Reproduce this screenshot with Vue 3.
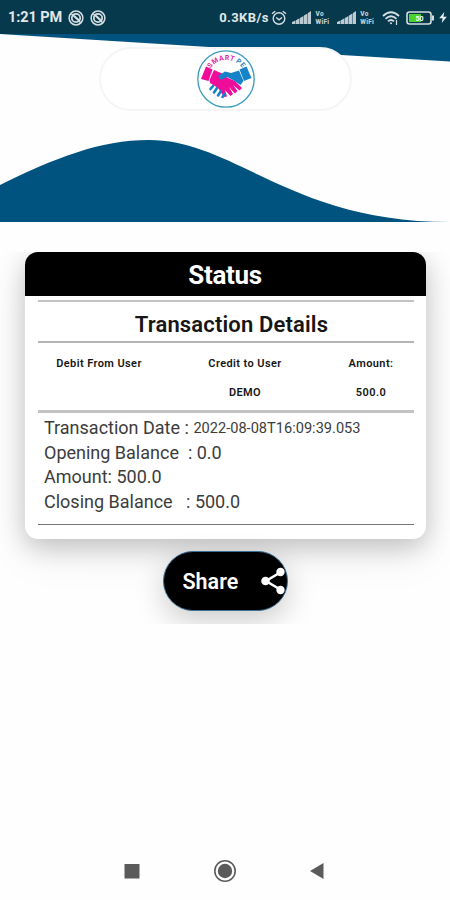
<template>
  <div class="screen">
    <header class="hero">
      <svg class="hero-bg" viewBox="0 0 450 222" width="450" height="222">
        <path d="M0 0H450V61.500L225 48L0 34Z" fill="#00527f" />
        <path d="M0 185C55 158 100 140 149 140C235 140 290 222 450 222H0Z" fill="#00527f" />
      </svg>

      <div class="status-bar">
        <span class="clock">1:21 PM</span>
        <svg v-for="n in 2" :key="n" class="notice" viewBox="0 0 16 16" width="16" height="16">
          <circle cx="8" cy="8" r="6.900" fill="none" stroke="#d5dee2" stroke-width="1.500" />
          <circle cx="8" cy="8" r="4.200" fill="none" stroke="#d5dee2" stroke-width="1.800" />
          <path d="M3.500 4L13 13M6 5.500L11 10" stroke="#d5dee2" stroke-width="1.500" />
        </svg>

        <span class="speed">0.3KB/s</span>
        <svg class="alarm" viewBox="0 0 16 16" width="16" height="16" fill="none" stroke="#d5dee2" stroke-width="1.400">
          <circle cx="8" cy="8.500" r="5.800" />
          <path d="M1 3.800L4.200 1.200M15 3.800L11.800 1.200M5.200 7.500L8 9.800L11 7.500" />
        </svg>
        <template v-for="n in 2" :key="n">
          <svg class="signal" viewBox="0 0 19 13" width="19" height="13" fill="#bccbd1">
            <path d="M0 13V11L3.500 9.500V13ZM4 13V9.300L7.500 7.300V13ZM8 13V7L11.500 5V13ZM12 13V4.500L15.500 2.400V13ZM16 13V2L19 0V13Z" />
          </svg>
          <span class="vowifi"><b>Vo</b><b>WiFi</b></span>
        </template>
        <svg class="wifi" viewBox="0 0 18 14" width="18" height="14" fill="none" stroke="#d5dee2" stroke-width="1.800">
          <path d="M1 5Q9 -2.500 17 5M3.500 7.800Q9 2.800 14.500 7.800M6 10.400Q9 7.600 12 10.400" />
          <circle cx="9" cy="12.200" r="1" fill="#d5dee2" stroke="none" />
          <path d="M14.500 9V14" stroke-width="1.200" />
        </svg>
        <svg class="battery" viewBox="0 0 29 14" width="29" height="14">
          <rect x="1" y="1" width="24" height="12" rx="2.500" fill="none" stroke="#d5dee2" stroke-width="1.600" />
          <rect x="3" y="3" width="12" height="8" fill="#4bd22c" />
          <path d="M27 4.500V9.500" stroke="#d5dee2" stroke-width="2" />
          <text x="13.500" y="10" text-anchor="middle" class="battery-level">50</text>
        </svg>
        <svg class="bolt" viewBox="0 0 9 13" width="8" height="11">
          <path d="M6 0L0 7.500H4L3 13L9 5.500H5Z" fill="#e8eef0" />
        </svg>
      </div>

      <div class="brand">
        <svg viewBox="0 0 60 60" width="60" height="60">
          <defs>
            <path id="arc" d="M12.500 23A19.500 19.500 0 0 1 48.500 23" />
          </defs>
          <circle cx="30" cy="30" r="28.200" fill="#fff" stroke="#3c9cbf" stroke-width="1.300" />
          <text class="logo-text">
            <textPath href="#arc" startOffset="50%" text-anchor="middle"><tspan fill="#e52aa0">SMART</tspan><tspan dx="1.200" fill="#2789bd">PE</tspan></textPath>
          </text>
          <!-- cuffs -->
          <path d="M5 30L10 17.500L16.500 20.500L12.500 32Z" fill="#ee0c98" />
          <path d="M43.500 20.500L50.500 17.500L55.500 29L48 32Z" fill="#1683c8" />
          <!-- hands -->
          <path d="M18 21L25 24L32 29L39 32L46 39L43.500 41.500L37 36L41.500 42L39 44.500L33 38L37 45L34.500 47L29 41L31 47.500L28 48L22 39L14 34L13.500 31Z" fill="#ee0c98" />
          <path d="M22 27L29 22.500L35 24L43 21.500L47.500 32L44.500 36L37 31L31 28L25 31Z" fill="#1683c8" />
          <path d="M17 37L14.500 40M21 39L18 43.500M25 42L22 46.500M28.500 45L26.500 48" stroke="#1683c8" stroke-width="2.600" stroke-linecap="round" />
        </svg>
      </div>
    </header>

    <main class="content">
      <section class="card">
        <h1>Status</h1>
        <div class="card-body">
          <h2>Transaction Details</h2>
          <div class="parties">
            <div v-for="p in parties" :key="p.label" class="party">
              <span>{{ p.label }}</span>
              <span>{{ p.value }}</span>
            </div>
          </div>
          <ul class="details">
            <li v-for="d in details" :key="d.label">
              <span>{{ d.label }}</span>
              <span :class="['value', d.name]">{{ d.value }}</span>
            </li>
          </ul>
        </div>
      </section>

      <button class="share">
        <span>Share</span>
        <svg viewBox="0 0 26 28" width="26" height="28" fill="#fff">
          <path d="M20 5L5 14L20 23" fill="none" stroke="#fff" stroke-width="2.600" />
          <circle cx="19.500" cy="5" r="4.200" />
          <circle cx="4.500" cy="14" r="4.300" />
          <circle cx="19.500" cy="23" r="4.200" />
        </svg>
      </button>
    </main>

    <nav class="nav-bar">
      <svg viewBox="0 0 16 16" width="16" height="16"><rect x="0.500" y="1" width="15" height="14.500" fill="#5b5b5b" /></svg>
      <svg viewBox="0 0 24 24" width="24" height="24">
        <circle cx="12" cy="12" r="10.200" fill="none" stroke="#5b5b5b" stroke-width="1.600" />
        <circle cx="12" cy="12" r="7.200" fill="#5b5b5b" />
      </svg>
      <svg viewBox="0 0 16 16" width="16" height="16"><path d="M1 8L14.500 0V16Z" fill="#5b5b5b" /></svg>
    </nav>
  </div>
</template>

<script setup>
const parties = [
  { label: 'Debit From User', value: '' },
  { label: 'Credit to User', value: 'DEMO' },
  { label: 'Amount:', value: '500.0' }
]

const details = [
  { name: 'date', label: 'Transaction Date :', value: '2022-08-08T16:09:39.053' },
  { name: 'opening', label: 'Opening Balance  :', value: '0.0' },
  { name: 'amount', label: 'Amount:', value: '500.0' },
  { name: 'closing', label: 'Closing Balance   :', value: '500.0' }
]
</script>

<style>
body {
  background: #fff;
}
</style>

<style scoped>
.screen {
  width: 450px;
  height: 900px;
  display: flex;
  flex-direction: column;
  overflow: hidden;
  background: #fefefe;
  font-family: Roboto, "Liberation Sans", sans-serif;
  color: #161616;
}

/* Header */
.hero {
  position: relative;
  height: 252px;
  flex: none;
}

.hero-bg {
  position: absolute;
  top: 0;
  left: 0;
}

.status-bar {
  position: relative;
  display: flex;
  align-items: center;
  height: 34px;
  box-sizing: border-box;
  padding: 1px 3px 0 8px;
  background: #07394c;
  color: #e0e8ea;
  font-weight: 700;
}

.status-bar svg {
  flex: none;
}

.clock {
  width: 61px;
  font-size: 14.5px;
  letter-spacing: -0.1px;
  white-space: nowrap;
}

.notice {
  margin-right: 6px;
}

.speed {
  width: 53px;
  margin-left: 107px;
  font-size: 13px;
  letter-spacing: 0.4px;
}

.signal {
  margin-left: 5px;
}

.vowifi {
  display: flex;
  flex-direction: column;
  width: 17px;
  margin-left: 4px;
  font-size: 6.5px;
  line-height: 8px;
  letter-spacing: 0.3px;
  color: #bccbd1;
}

.wifi {
  margin-left: 5px;
}

.battery {
  margin-left: 6px;
}

.battery-level {
  font-size: 7px;
  fill: #fff;
}

.bolt {
  margin-left: 4px;
}

.brand {
  position: relative;
  display: flex;
  justify-content: center;
  align-items: center;
  box-sizing: border-box;
  width: 253px;
  height: 64px;
  margin: 13px 0 0 99px;
  border: 2px solid #f5f5f5;
  border-radius: 32px;
  background: #fff;
}

.logo-text {
  font-size: 7px;
  font-weight: 700;
  letter-spacing: 0.6px;
}

/* Receipt */
.content {
  display: flex;
  flex-direction: column;
  align-items: center;
  height: 372px;
  flex: none;
  overflow: hidden;
}

.card {
  width: 401px;
  height: 287px;
  flex: none;
  overflow: hidden;
  border-radius: 13px;
  background: #fff;
  box-shadow: 0 8px 26px rgba(0, 0, 0, 0.2), 0 14px 46px rgba(0, 0, 0, 0.08);
}

h1 {
  margin: 0;
  height: 44px;
  background: #000;
  color: #fff;
  font-size: 26px;
  line-height: 47px;
  font-weight: 700;
  text-align: center;
  letter-spacing: -0.3px;
}

.card-body {
  margin: 4px 12px 0 13px;
  border-top: 2px solid #c3c3c3;
}

h2 {
  margin: 0;
  height: 39px;
  padding-left: 12px;
  border-bottom: 2px solid #b4b4b4;
  font-size: 22px;
  line-height: 46px;
  font-weight: 600;
  text-align: center;
  letter-spacing: 0.15px;
}

.parties {
  display: grid;
  grid-template-columns: 123px 169px 83px;
  height: 67px;
  border-bottom: 3px solid #c3c3c3;
}

.party {
  display: flex;
  flex-direction: column;
  align-items: center;
  font-size: 11px;
  font-weight: 600;
  line-height: 29px;
  letter-spacing: 0.4px;
  padding-top: 6px;
}

.details {
  height: 112px;
  margin: 0;
  padding: 2.5px 0 0 6.5px;
  box-sizing: border-box;
  border-bottom: 1.5px solid #777;
  list-style: none;
}

.details li {
  display: flex;
  align-items: center;
  gap: 4.5px;
  height: 24.5px;
  font-size: 18px;
  font-weight: 400;
  white-space: pre;
  color: #3c3c3c;
}

.value.date {
  padding-top: 1px;
  font-size: 14.6px;
}

/* Share button */
.share {
  position: relative;
  display: flex;
  align-items: center;
  justify-content: space-between;
  box-sizing: border-box;
  width: 125px;
  height: 60px;
  flex: none;
  margin-top: 12px;
  padding: 0 0 0 19px;
  border: 1px solid #3b6f93;
  border-radius: 30px;
  background: #000;
  color: #fff;
  font-family: inherit;
  font-size: 21.5px;
  font-weight: 600;
  box-shadow: 0 10px 30px rgba(0, 0, 0, 0.2);
}

/* System navigation */
.nav-bar {
  display: flex;
  align-items: center;
  justify-content: space-between;
  height: 59px;
  margin-top: auto;
  padding: 0 125px 0 124px;
}
</style>
